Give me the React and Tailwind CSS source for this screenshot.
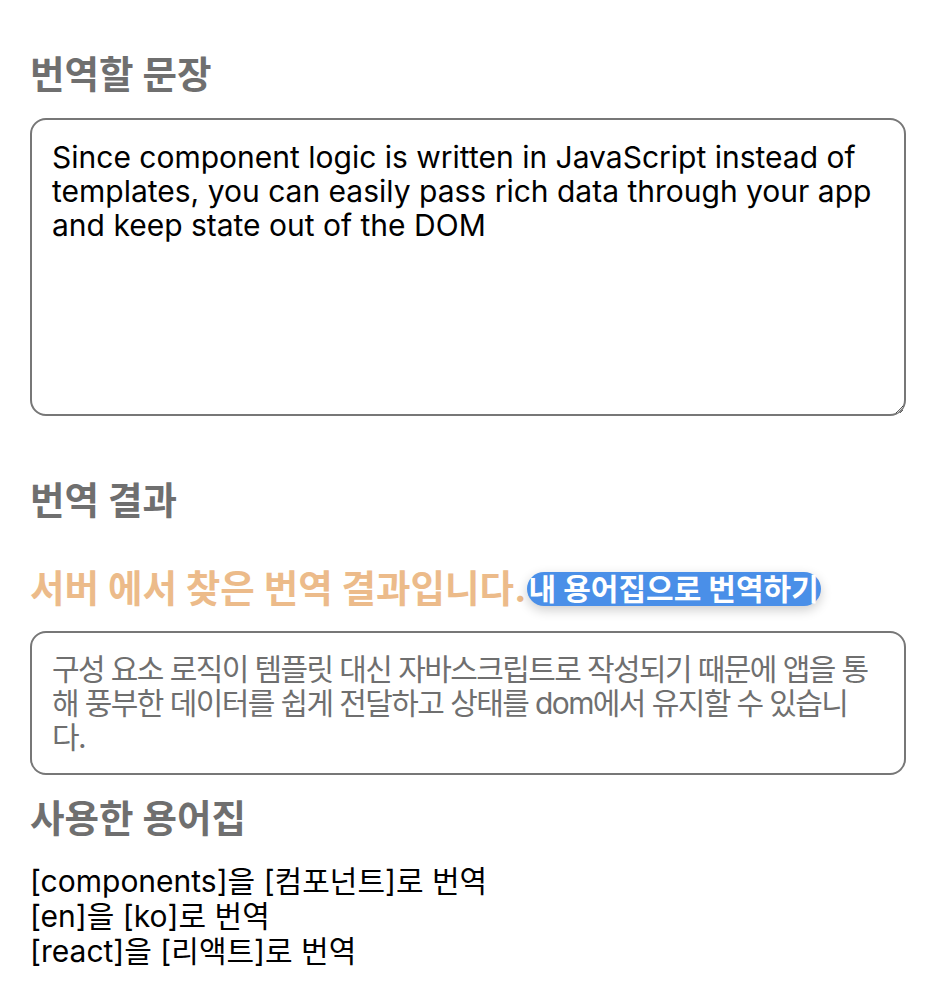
import React, { useState } from 'react';

const FONT = { fontFamily: 'Inter, "Noto Sans CJK KR", sans-serif' };

const GLOSSARY = [
  ['components', '컴포넌트'],
  ['en', 'ko'],
  ['react', '리액트'],
];

export default function App() {
  const [source, setSource] = useState(
    'Since component logic is written in JavaScript instead of templates, you can easily pass rich data through your app and keep state out of the DOM'
  );

  return (
    <main className="min-h-screen bg-white px-[30px] pt-[50px] pb-6" style={FONT}>
      {/* 번역할 문장 */}
      <h2 className="text-[37.5px] font-bold text-[#6f6f6f] leading-[50px]">번역할 문장</h2>
      <textarea
        className="mt-[18px] block w-full h-[298px] rounded-[16px] border-2 border-[#777] px-[20px] pt-[20px] pb-[22px] text-[30px] leading-[34px] text-black outline-none"
        value={source}
        onChange={(e) => setSource(e.target.value)}
      />

      {/* 번역 결과 */}
      <h2 className="mt-[60px] text-[37.5px] font-bold text-[#6f6f6f] leading-[50px]">번역 결과</h2>
      <div className="mt-[43px] flex items-center h-[40px]">
        <span className="text-[37.5px] font-bold text-[#ecbb8a] leading-[40px]">서버 에서 찾은 번역 결과입니다.</span>
        <button className="rounded-full bg-[#4a8fe8] px-[2px] text-[30px] font-bold leading-[34px] text-white shadow-[0_4px_12px_rgba(0,0,0,0.2)]">
          내 용어집으로 번역하기
        </button>
      </div>
      <div className="mt-[22px] rounded-[16px] border-2 border-[#777] pl-[20px] pr-[24px] py-[19px] text-[30px] leading-[34px] tracking-[-1.6px] text-[#6f6f6f]">
        구성 요소 로직이 템플릿 대신 자바스크립트로 작성되기 때문에 앱을 통해 풍부한 데이터를 쉽게 전달하고 상태를 dom에서 유지할 수 있습니다.
      </div>

      {/* 사용한 용어집 */}
      <h2 className="mt-[19px] text-[37.5px] font-bold text-[#6f6f6f] leading-[50px]">사용한 용어집</h2>
      <ul className="mt-[20px] text-[30px] leading-[35px] text-black">
        {GLOSSARY.map(([from, to]) => (
          <li key={from}>
            [{from}]을 [{to}]로 번역
          </li>
        ))}
      </ul>
    </main>
  );
}
